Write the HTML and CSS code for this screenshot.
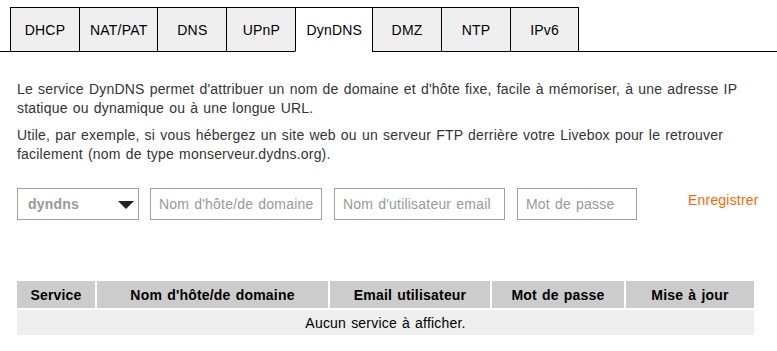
FILE: index.html
```html
<!DOCTYPE html>
<html lang="fr">

<head>
    <meta charset="UTF-8">
    <meta name="viewport" content="width=device-width, initial-scale=1.0">
    <title>DynDNS</title>
    <link rel="stylesheet" href="styles.css">
</head>

<body>
    <!-- Onglets -->
    <ul class="tabs">
        <li class="tab">DHCP</li>
        <li class="tab">NAT/PAT</li>
        <li class="tab">DNS</li>
        <li class="tab">UPnP</li>
        <li class="tab active">DynDNS</li>
        <li class="tab">DMZ</li>
        <li class="tab">NTP</li>
        <li class="tab">IPv6</li>
    </ul>

    <div class="content">
        <p class="intro">Le service DynDNS permet d'attribuer un nom de domaine et d'hôte fixe, facile à mémoriser, à une adresse IP statique ou dynamique ou à une longue URL.</p>
        <p class="intro second">Utile, par exemple, si vous hébergez un site web ou un serveur FTP derrière votre Livebox pour le retrouver facilement (nom de type monserveur.dydns.org).</p>

        <!-- Formulaire d'ajout -->
        <div class="form-row">
            <div class="select-box">
                <span class="select-value">dyndns</span>
                <span class="select-arrow"></span>
            </div>
            <input type="text" class="field field-host" placeholder="Nom d'hôte/de domaine">
            <input type="text" class="field field-user" placeholder="Nom d'utilisateur email">
            <input type="password" class="field field-pass" placeholder="Mot de passe">
            <a class="save-link">Enregistrer</a>
        </div>

        <!-- Liste des services -->
        <table class="service-table">
            <thead>
                <tr>
                    <th class="col-service">Service</th>
                    <th class="col-host">Nom d'hôte/de domaine</th>
                    <th class="col-email">Email utilisateur</th>
                    <th class="col-pass">Mot de passe</th>
                    <th class="col-update">Mise à jour</th>
                </tr>
            </thead>
            <tbody>
                <tr>
                    <td colspan="5" class="empty">Aucun service à afficher.</td>
                </tr>
            </tbody>
        </table>
    </div>
</body>

</html>
```

FILE: styles.css
```css
:root {
    --tab-bg: #efefef;
    --line-color: #000;
    --field-border: #a0a0a0;
    --placeholder: #999;
    --text-color: #333;
    --accent: #ff6600;
    --head-bg: #cccccc;
    --row-bg: #eeeeee;
}

* {
    box-sizing: border-box;
    margin: 0;
    padding: 0;
}

body {
    font-family: 'Liberation Sans', Arial, sans-serif;
    font-size: 14px;
    letter-spacing: 0.2px;
    word-spacing: 1px;
    color: var(--text-color);
    background-color: #fff;
}

/* Onglets */
.tabs {
    list-style: none;
    display: flex;
    margin-top: 7px;
    padding-left: 10px;
    border-bottom: 1px solid var(--line-color);
}

.tab {
    min-width: 69px;
    height: 45px;
    padding: 0 10px;
    margin-bottom: -1px;
    display: flex;
    align-items: center;
    justify-content: center;
    background-color: var(--tab-bg);
    border-top: 1px solid var(--line-color);
    border-left: 1px solid var(--line-color);
    border-bottom: 1px solid var(--line-color);
    color: #000;
}

.tab:last-child {
    border-right: 1px solid var(--line-color);
}

.tab.active {
    background-color: #fff;
    border-bottom-color: #fff;
}

/* Contenu */
.content {
    padding: 28px 17px 0 17px;
}

.intro {
    line-height: 19px;
}

.intro.second {
    margin-top: 8px;
}

.form-row {
    display: flex;
    align-items: flex-start;
    margin-top: 24px;
}

.select-box {
    width: 122px;
    height: 32px;
    border: 1px solid var(--field-border);
    display: flex;
    align-items: center;
    justify-content: space-between;
    padding: 0 4px 0 10px;
    margin-right: 11px;
}

.select-value {
    font-weight: bold;
    color: var(--placeholder);
}

.select-arrow {
    width: 0;
    height: 0;
    border-left: 8px solid transparent;
    border-right: 8px solid transparent;
    border-top: 8px solid #222;
    margin-top: 2px;
}

.field {
    height: 32px;
    border: 1px solid var(--field-border);
    padding: 0 8px;
    font-family: inherit;
    font-size: 14px;
    letter-spacing: inherit;
    word-spacing: inherit;
    color: var(--text-color);
    margin-right: 12px;
}

.field::placeholder {
    color: var(--placeholder);
}

.field-host {
    width: 172px;
}

.field-user {
    width: 171px;
}

.field-pass {
    width: 120px;
}

.save-link {
    margin-left: 39px;
    margin-top: 4px;
    color: var(--accent);
    cursor: pointer;
}

/* Tableau */
.service-table {
    margin-top: 59px;
    margin-left: -2px;
    width: 741px;
    border-spacing: 2px;
    table-layout: fixed;
}

.service-table th {
    height: 27px;
    background-color: var(--head-bg);
    color: #000;
    font-weight: bold;
    text-align: center;
}

.col-service {
    width: 78px;
}

.col-host {
    width: 231px;
}

.col-email {
    width: 160px;
}

.col-pass {
    width: 132px;
}

.col-update {
    width: 128px;
}

.service-table td.empty {
    height: 25px;
    background-color: var(--row-bg);
    color: #000;
    text-align: center;
}
```
